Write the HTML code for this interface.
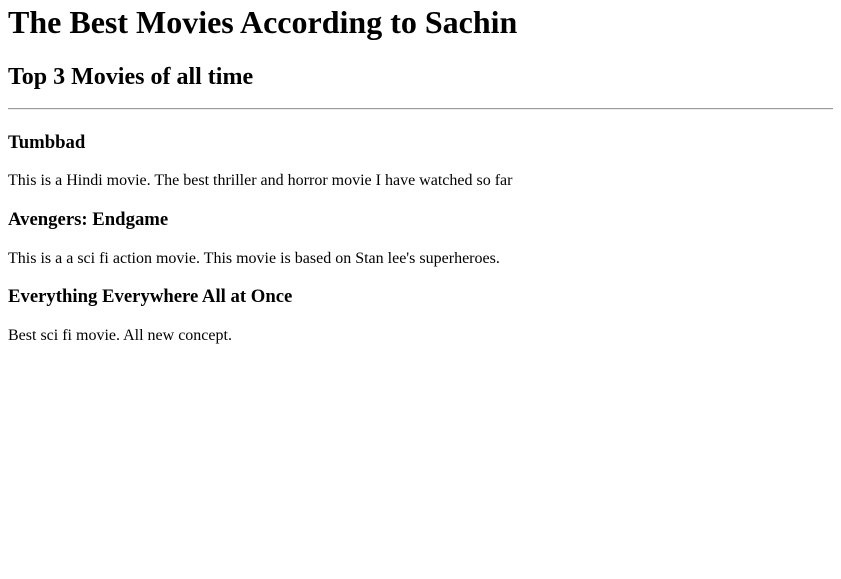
<!DOCTYPE html>
<html>
<head>
<meta charset="utf-8">
<style>
body{margin:0 8px;padding-top:4px;font-family:"Liberation Serif",serif;color:#000;background:#fff;}
h1{font-size:32px;margin:0 0 22.5px;}
h2{font-size:24px;margin:0 0 17px;}
hr{margin:8px 0 22px;border:none;border-top:1px solid #9a9a9a;border-bottom:1px solid #eee;height:0;}
h3{font-size:18.72px;margin:18.72px 0;}
p{font-size:16px;margin:16px 0;}
</style>
</head>
<body>
<h1>The Best Movies According to Sachin</h1>
<h2>Top 3 Movies of all time</h2>
<hr>
<h3>Tumbbad</h3>
<p>This is a Hindi movie. The best thriller and horror movie I have watched so far</p>
<h3>Avengers: Endgame</h3>
<p>This is a a sci fi action movie. This movie is based on Stan lee's superheroes.</p>
<h3>Everything Everywhere All at Once</h3>
<p>Best sci fi movie. All new concept.</p>
</body>
</html>
